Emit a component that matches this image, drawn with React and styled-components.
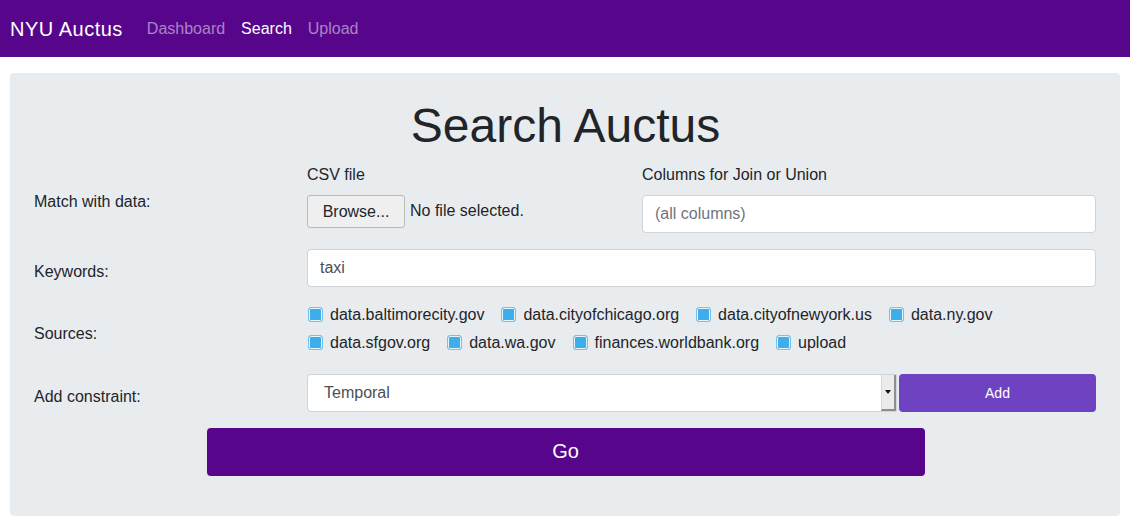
import React from 'react'
import styled, { createGlobalStyle } from 'styled-components'

const GlobalStyle = createGlobalStyle`
  body {
    margin: 0;
    background: #fff;
    font-family: "Liberation Sans", Arial, sans-serif;
    font-size: 16px;
    line-height: 1.5;
    color: #212529;
  }
  * { box-sizing: border-box; }
`

const Navbar = styled.nav`
  display: flex;
  align-items: center;
  height: 57px;
  padding: 0 10px;
  background: #57068c;
`

const Brand = styled.a`
  font-size: 20px;
  letter-spacing: 0.5px;
  color: #fff;
  margin-right: 16px;
  line-height: 1.5;
`

const NavLink = styled.a`
  padding: 8px;
  color: ${(props) => (props.active ? '#fff' : 'rgba(255, 255, 255, 0.5)')};
`

const Jumbotron = styled.div`
  margin: 16px 10px 10px;
  padding: 24px 23px 40px 24px;
  background: #e9ecef;
  border-radius: 4px;
`

const Title = styled.h1`
  margin: 0 0 8px;
  font-size: 48px;
  font-weight: 400;
  line-height: 1.2;
  text-align: center;
`

const FormRow = styled.div`
  display: grid;
  grid-template-columns: 273px 789px;
  margin-bottom: 16px;
`

const RowLabel = styled.label`
  align-self: center;
  padding-top: 8px;
`

const SplitFields = styled.div`
  display: grid;
  grid-template-columns: 323px 454px;
  column-gap: 12px;
`

const FieldLabel = styled.label`
  display: block;
  margin-bottom: 8px;
`

const FileLine = styled.div`
  display: flex;
  align-items: center;
  height: 33px;
  margin-top: 1px;
`

const BrowseButton = styled.button`
  height: 33px;
  width: 98px;
  padding: 2px 0 0;
  margin-right: 5px;
  font-family: inherit;
  font-size: 16px;
  color: #212529;
  background: #efefef;
  border: 1px solid #b9b9b9;
  border-radius: 3px;
`

const TextInput = styled.input`
  display: block;
  width: 100%;
  height: 38px;
  padding: 6px 12px;
  font-family: inherit;
  font-size: 16px;
  color: #495057;
  background: #fff;
  border: 1px solid #ced4da;
  border-radius: 4px;
  outline: none;

  &::placeholder {
    color: #6c757d;
  }
`

const Sources = styled.div`
  display: flex;
  flex-wrap: wrap;
  row-gap: 4px;
  padding-bottom: 3px;
`

const SourceItem = styled.label`
  display: inline-flex;
  align-items: center;
  gap: 7px;
  margin-right: 16px;
  line-height: 24px;
`

const CheckBox = styled.span`
  display: inline-block;
  width: 15px;
  height: 15px;
  margin: 0 0 0 1px;
  border-radius: 3px;
  background: #3daee9;
  border: 1px solid #79bfe8;
  box-shadow: inset 0 0 0 1px #e8f4fb;
`

const ConstraintLine = styled.div`
  display: flex;
  gap: 2px;
`

const SelectBox = styled.div`
  display: flex;
  width: 590px;
  height: 38px;
  background: #fff;
  border: 1px solid #ced4da;
  border-radius: 4px 0 0 4px;
  overflow: hidden;
`

const SelectValue = styled.span`
  flex: 1;
  padding: 6px 16px;
  color: #495057;
`

const SelectArrow = styled.span`
  display: flex;
  align-items: center;
  justify-content: center;
  width: 15px;
  background: #ebebeb;
  border-left: 1px solid #d8d8d8;
  border-right: 2px solid #8d8d8d;
  border-bottom: 2px solid #8d8d8d;

  &::after {
    content: '';
    border-left: 3px solid transparent;
    border-right: 3px solid transparent;
    border-top: 4px solid #111;
  }
`

const AddButton = styled.button`
  width: 197px;
  height: 38px;
  font-family: inherit;
  font-size: 14px;
  color: #fff;
  background: #6f42c1;
  border: none;
  border-radius: 4px;
`

const GoButton = styled.button`
  display: block;
  width: 718px;
  height: 48px;
  margin: 0 auto;
  font-family: inherit;
  font-size: 20px;
  color: #fff;
  background: #57068c;
  border: none;
  border-radius: 4px;
`

const sources = [
  'data.baltimorecity.gov',
  'data.cityofchicago.org',
  'data.cityofnewyork.us',
  'data.ny.gov',
  'data.sfgov.org',
  'data.wa.gov',
  'finances.worldbank.org',
  'upload',
]

export default function App() {
  return (
    <>
      <GlobalStyle />
      <Navbar>
        <Brand>NYU Auctus</Brand>
        <NavLink>Dashboard</NavLink>
        <NavLink active>Search</NavLink>
        <NavLink>Upload</NavLink>
      </Navbar>
      <Jumbotron>
        <Title>Search Auctus</Title>
        <FormRow>
          <RowLabel>Match with data:</RowLabel>
          <SplitFields>
            <div>
              <FieldLabel>CSV file</FieldLabel>
              <FileLine>
                <BrowseButton>Browse...</BrowseButton>
                <span>No file selected.</span>
              </FileLine>
            </div>
            <div>
              <FieldLabel>Columns for Join or Union</FieldLabel>
              <TextInput placeholder="(all columns)" readOnly />
            </div>
          </SplitFields>
        </FormRow>
        <FormRow>
          <RowLabel>Keywords:</RowLabel>
          <TextInput defaultValue="taxi" />
        </FormRow>
        <FormRow>
          <RowLabel>Sources:</RowLabel>
          <Sources>
            {sources.map((s) => (
              <SourceItem key={s}>
                <CheckBox />
                {s}
              </SourceItem>
            ))}
          </Sources>
        </FormRow>
        <FormRow>
          <RowLabel>Add constraint:</RowLabel>
          <ConstraintLine>
            <SelectBox>
              <SelectValue>Temporal</SelectValue>
              <SelectArrow />
            </SelectBox>
            <AddButton>Add</AddButton>
          </ConstraintLine>
        </FormRow>
        <GoButton>Go</GoButton>
      </Jumbotron>
    </>
  )
}
